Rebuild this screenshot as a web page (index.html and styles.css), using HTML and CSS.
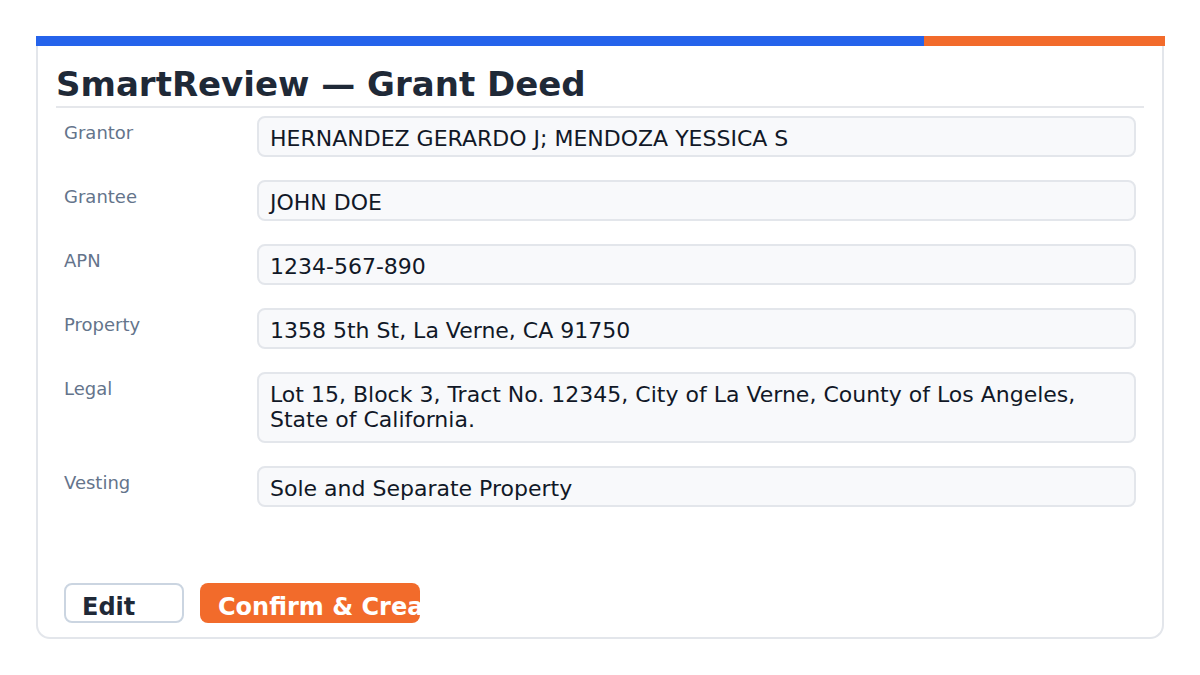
FILE: index.html
```html
<!DOCTYPE html>
<html>
<head>
<meta charset="utf-8">
<link rel="stylesheet" href="styles.css">
</head>
<body>
<div class="frame">
  <div class="accent"><div class="accent-blue"></div><div class="accent-orange"></div></div>
  <div class="card">
    <h1 class="title">SmartReview — Grant Deed</h1>
    <div class="fields">
      <div class="row"><div class="label">Grantor</div><div class="value">HERNANDEZ GERARDO J; MENDOZA YESSICA S</div></div>
      <div class="row"><div class="label">Grantee</div><div class="value">JOHN DOE</div></div>
      <div class="row"><div class="label">APN</div><div class="value">1234-567-890</div></div>
      <div class="row"><div class="label">Property</div><div class="value">1358 5th St, La Verne, CA 91750</div></div>
      <div class="row"><div class="label">Legal</div><div class="value value-multi">Lot 15, Block 3, Tract No. 12345, City of La Verne, County of Los Angeles, State of California.</div></div>
      <div class="row"><div class="label">Vesting</div><div class="value">Sole and Separate Property</div></div>
    </div>
    <div class="actions">
      <button class="btn btn-edit">Edit</button>
      <button class="btn btn-confirm">Confirm &amp; Create</button>
    </div>
  </div>
</div>
</body>
</html>
```
FILE: styles.css
```css
html, body {
  margin: 0;
  padding: 0;
  background: #ffffff;
  font-family: "DejaVu Sans", sans-serif;
}
.frame {
  width: 1129px;
  margin: 36px 0 0 36px;
}
.accent {
  display: flex;
  height: 10px;
}
.accent-blue {
  width: 888px;
  background: #2563eb;
}
.accent-orange {
  flex: 1;
  background: #f26b2b;
}
.card {
  width: 1128px;
  box-sizing: border-box;
  height: 593px;
  border: 2px solid #e3e6eb;
  border-top: none;
  border-radius: 0 0 14px 14px;
  padding: 0 18px 14px 18px;
  display: flex;
  flex-direction: column;
}
.title {
  margin: 0;
  padding: 18px 0 2px 0;
  font-size: 34px;
  font-weight: bold;
  color: #1f2937;
  line-height: 40px;
  border-bottom: 2px solid #e5e7eb;
}
.fields {
  display: flex;
  flex-direction: column;
  gap: 23px;
  padding: 8px 8px 0 8px;
}
.row {
  display: grid;
  grid-template-columns: 181px 1fr;
  gap: 12px;
}
.label {
  font-size: 18px;
  color: #64748b;
  padding-top: 6px;
  line-height: 22px;
}
.value {
  box-sizing: border-box;
  border: 2px solid #e3e6eb;
  border-radius: 8px;
  background: #f8f9fb;
  padding: 8px 11px 4px 11px;
  font-size: 22px;
  line-height: 25px;
  color: #111827;
}
.value-multi {
  padding-bottom: 9px;
}
.actions {
  margin-top: auto;
  display: flex;
  gap: 16px;
  padding-left: 8px;
}
.btn {
  height: 40px;
  box-sizing: border-box;
  border-radius: 8px;
  font-family: "DejaVu Sans", sans-serif;
  font-size: 24px;
  font-weight: bold;
  text-align: left;
  padding: 8px 16px 0 16px;
  white-space: nowrap;
  overflow: hidden;
  cursor: pointer;
}
.btn-edit {
  width: 120px;
  background: #ffffff;
  border: 2px solid #cbd5e1;
  color: #1f2937;
}
.btn-confirm {
  width: 220px;
  background: #f26b2b;
  border: none;
  color: #ffffff;
  padding-left: 18px;
}
```
